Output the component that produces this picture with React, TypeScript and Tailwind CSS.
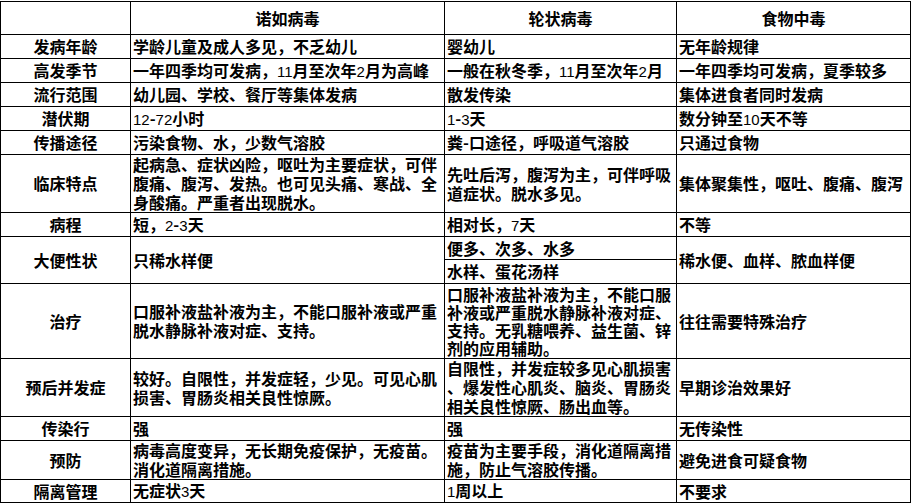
import React from 'react'

type Cell = string | string[]

interface Row {
  label: string
  h: string
  a: Cell
  b: Cell
  c: Cell
}

const rows: Row[] = [
  { label: '发病年龄', h: 'h-[24px]', a: '学龄儿童及成人多见，不乏幼儿', b: '婴幼儿', c: '无年龄规律' },
  { label: '高发季节', h: 'h-[24px]', a: '一年四季均可发病，11月至次年2月为高峰', b: '一般在秋冬季，11月至次年2月', c: '一年四季均可发病，夏季较多' },
  { label: '流行范围', h: 'h-[24px]', a: '幼儿园、学校、餐厅等集体发病', b: '散发传染', c: '集体进食者同时发病' },
  { label: '潜伏期', h: 'h-[24px]', a: '12-72小时', b: '1-3天', c: '数分钟至10天不等' },
  { label: '传播途径', h: 'h-[24px]', a: '污染食物、水，少数气溶胶', b: '粪-口途径，呼吸道气溶胶', c: '只通过食物' },
  {
    label: '临床特点',
    h: 'h-[58px]',
    a: ['起病急、症状凶险，呕吐为主要症状，可伴', '腹痛、腹泻、发热。也可见头痛、寒战、全', '身酸痛。严重者出现脱水。'],
    b: ['先吐后泻，腹泻为主，可伴呼吸', '道症状。脱水多见。'],
    c: '集体聚集性，呕吐、腹痛、腹泻',
  },
  { label: '病程', h: 'h-[24px]', a: '短，2-3天', b: '相对长，7天', c: '不等' },
]

const rows2: Row[] = [
  {
    label: '治疗',
    h: 'h-[75px]',
    a: ['口服补液盐补液为主，不能口服补液或严重', '脱水静脉补液对症、支持。'],
    b: ['口服补液盐补液为主，不能口服', '补液或严重脱水静脉补液对症、', '支持。无乳糖喂养、益生菌、锌', '剂的应用辅助。'],
    c: '往往需要特殊治疗',
  },
  {
    label: '预后并发症',
    h: 'h-[58px]',
    a: ['较好。自限性，并发症轻，少见。可见心肌', '损害、胃肠炎相关良性惊厥。'],
    b: ['自限性，并发症较多见心肌损害', '、爆发性心肌炎、脑炎、胃肠炎', '相关良性惊厥、肠出血等。'],
    c: '早期诊治效果好',
  },
  { label: '传染行', h: 'h-[24px]', a: '强', b: '强', c: '无传染性' },
  {
    label: '预防',
    h: 'h-[38px]',
    a: ['病毒高度变异，无长期免疫保护，无疫苗。', '消化道隔离措施。'],
    b: ['疫苗为主要手段，消化道隔离措', '施，防止气溶胶传播。'],
    c: '避免进食可疑食物',
  },
  { label: '隔离管理', h: 'h-[23px]', a: '无症状3天', b: '1周以上', c: '不要求' },
]

// digits in the source are set in a thin narrow face
function Text({ s }: { s: string }) {
  const parts = s.split(/(\d+)/)
  return (
    <>
      {parts.map((p, i) =>
        /^\d+$/.test(p) ? (
          <span key={i} className="font-normal font-['Liberation_Sans'] text-[15px]">
            {p}
          </span>
        ) : (
          <React.Fragment key={i}>{p}</React.Fragment>
        )
      )}
    </>
  )
}

function Content({ c, tight }: { c: Cell; tight?: boolean }) {
  if (typeof c === 'string') return <Text s={c} />
  return (
    <div className={tight ? 'leading-[18px]' : 'leading-[19px]'}>
      {c.map((line, i) => (
        <div key={i}>
          <Text s={line} />
        </div>
      ))}
    </div>
  )
}

const td = 'border border-black px-[2px] py-0 align-middle whitespace-nowrap'
const th = 'border border-black text-center align-middle whitespace-nowrap'

function BodyRow({ row }: { row: Row }) {
  return (
    <tr className={row.h}>
      <td className={th}>{row.label}</td>
      <td className={td}>
        <Content c={row.a} />
      </td>
      <td className={td}>
        <Content c={row.b} tight={Array.isArray(row.b) && row.b.length > 3} />
      </td>
      <td className={td}>
        <Content c={row.c} />
      </td>
    </tr>
  )
}

export default function App() {
  return (
    <div className="w-[911px] h-[503px] bg-white pt-px font-['Noto_Sans_CJK_SC',sans-serif] font-bold text-[16px] text-black leading-[19px]">
      <table className="table-fixed border-collapse w-[910px]">
        <colgroup>
          <col className="w-[130px]" />
          <col className="w-[314px]" />
          <col className="w-[232px]" />
          <col className="w-[234px]" />
        </colgroup>
        <tbody>
          <tr className="h-[33px]">
            <td className={th}></td>
            <td className={th}>诺如病毒</td>
            <td className={th}>轮状病毒</td>
            <td className={th}>食物中毒</td>
          </tr>
          {rows.map((r) => (
            <BodyRow key={r.label} row={r} />
          ))}
          <tr className="h-[23px]">
            <td rowSpan={2} className={th}>大便性状</td>
            <td rowSpan={2} className={td}>只稀水样便</td>
            <td className={td}>便多、次多、水多</td>
            <td rowSpan={2} className={td}>稀水便、血样、脓血样便</td>
          </tr>
          <tr className="h-[24px]">
            <td className={td}>水样、蛋花汤样</td>
          </tr>
          {rows2.map((r) => (
            <BodyRow key={r.label} row={r} />
          ))}
        </tbody>
      </table>
    </div>
  )
}
